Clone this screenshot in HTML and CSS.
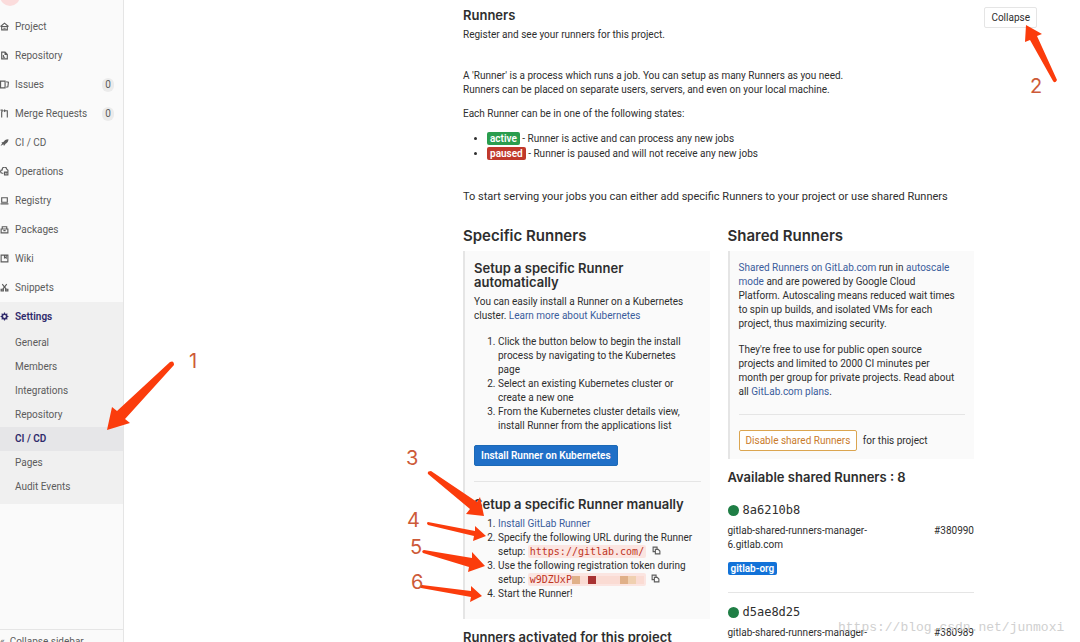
FILE: index.html
```html
<!DOCTYPE html>
<html lang="en">
<head>
    <meta charset="UTF-8">
    <meta name="viewport" content="width=device-width, initial-scale=1.0">
    <title>CI / CD Settings</title>
    <link rel="stylesheet" href="styles.css">
</head>
<body>
    <!-- Sidebar -->
    <aside class="sidebar">
        <div class="avatar"></div>
        <nav>
            <ul class="menu">
                <li><a href="#">
                    <svg class="icon" viewBox="0 0 16 16"><path d="M1 8l7-6 7 6M3 8v6h10V8M1 8h14M6 11h4"/></svg>
                    Project</a></li>
                <li><a href="#">
                    <svg class="icon" viewBox="0 0 16 16"><path d="M3 2h6l4 4v8H3zM9 2v4h4M6 7v4h3"/></svg>
                    Repository</a></li>
                <li><a href="#">
                    <svg class="icon" viewBox="0 0 16 16"><path d="M1 2h8v12H1zM11 3l4 1-1 8-3 1"/></svg>
                    Issues <span class="count">0</span></a></li>
                <li><a href="#">
                    <svg class="icon" viewBox="0 0 16 16"><path d="M3 15V4M1 2h3v3M7 3h6v12M9 1L7 3l2 2"/></svg>
                    Merge Requests <span class="count">0</span></a></li>
                <li><a href="#">
                    <svg class="icon solid" viewBox="0 0 16 16"><path d="M15 2c-5 0-7 2-9 5L2 8l2 1-3 5 5-3 1 3 3-4c3-2 5-4 5-8z"/></svg>
                    CI / CD</a></li>
                <li><a href="#">
                    <svg class="icon" viewBox="0 0 16 16"><path d="M6 11H4a3 3 0 0 1 0-6 4 4 0 0 1 8-1 3 3 0 0 1 2 4M8 9h6v5H8zM10 11h2"/></svg>
                    Operations</a></li>
                <li><a href="#">
                    <svg class="icon" viewBox="0 0 16 16"><path d="M3 3h10v8H3zM1 14h14"/></svg>
                    Registry</a></li>
                <li><a href="#">
                    <svg class="icon" viewBox="0 0 16 16"><path d="M2 7h12v7H2zM4 7V3h8v4M6 10h4"/></svg>
                    Packages</a></li>
                <li><a href="#">
                    <svg class="icon" viewBox="0 0 16 16"><path d="M2 2h12v12H2zM8 2v5l2-1 1 1V2"/></svg>
                    Wiki</a></li>
                <li><a href="#">
                    <svg class="icon" viewBox="0 0 16 16"><path d="M4 2l7 9M12 2L5 11M2 11h4v3H2zM10 11h4v3h-4z"/></svg>
                    Snippets</a></li>
            </ul>
            <div class="settings">
                <a class="settings-title" href="#">
                    <svg class="icon" viewBox="0 0 16 16"><circle cx="8" cy="8" r="4" stroke-width="3"/><path d="M8 1v3M8 12v3M1 8h3M12 8h3M3 3l2 2M11 11l2 2M13 3l-2 2M5 11l-2 2"/></svg>
                    Settings</a>
                <ul class="submenu">
                    <li><a href="#">General</a></li>
                    <li><a href="#">Members</a></li>
                    <li><a href="#">Integrations</a></li>
                    <li><a href="#">Repository</a></li>
                    <li><a class="current" href="#">CI / CD</a></li>
                    <li><a href="#">Pages</a></li>
                    <li><a href="#">Audit Events</a></li>
                </ul>
            </div>
        </nav>
        <a class="collapse-sidebar" href="#">&laquo; &nbsp;Collapse sidebar</a>
    </aside>

    <!-- Runners settings -->
    <main class="content">
        <header class="section-header">
            <div>
                <h1>Runners</h1>
                <p>Register and see your runners for this project.</p>
            </div>
            <button class="btn" type="button">Collapse</button>
        </header>

        <div class="section-body">
            <p>A 'Runner' is a process which runs a job. You can setup as many Runners as you need.<br>
            Runners can be placed on separate users, servers, and even on your local machine.</p>
            <p>Each Runner can be in one of the following states:</p>
            <ul class="states">
                <li><span class="label green">active</span> - Runner is active and can process any new jobs</li>
                <li><span class="label red">paused</span> - Runner is paused and will not receive any new jobs</li>
            </ul>
            <p class="lead">To start serving your jobs you can either add specific Runners to your project or use shared Runners</p>

            <div class="columns">
                <section>
                    <h2>Specific Runners</h2>
                    <div class="well specific">
                        <h3>Setup a specific Runner automatically</h3>
                        <p>You can easily install a Runner on a Kubernetes cluster. <a href="#">Learn more about Kubernetes</a></p>
                        <ol>
                            <li>Click the button below to begin the install process by navigating to the Kubernetes page</li>
                            <li>Select an existing Kubernetes cluster or create a new one</li>
                            <li>From the Kubernetes cluster details view, install Runner from the applications list</li>
                        </ol>
                        <button class="btn primary" type="button">Install Runner on Kubernetes</button>
                        <hr>
                        <h3>Setup a specific Runner manually</h3>
                        <ol>
                            <li><a href="#">Install GitLab Runner</a></li>
                            <li>Specify the following URL during the Runner setup: <code>https://gitlab.com/</code>
                                <button class="copy" type="button" aria-label="Copy URL"><svg class="icon" viewBox="0 0 16 16"><path d="M5 10H2V2h7v3M6 6h5l3 3v5H6z"/></svg></button></li>
                            <li>Use the following registration token during setup: <code class="token">w9DZUxP<span class="mosaic"><i class="tan"></i><i></i><i class="dark"></i><i></i><i></i><i></i><i class="tan"></i><i class="sand"></i><i></i></span></code>
                                <button class="copy" type="button" aria-label="Copy token"><svg class="icon" viewBox="0 0 16 16"><path d="M5 10H2V2h7v3M6 6h5l3 3v5H6z"/></svg></button></li>
                            <li>Start the Runner!</li>
                        </ol>
                    </div>
                    <h4>Runners activated for this project</h4>
                </section>

                <section>
                    <h2>Shared Runners</h2>
                    <div class="well shared">
                        <p><a href="#">Shared Runners on GitLab.com</a> run in <a href="#">autoscale mode</a> and are powered by Google Cloud Platform. Autoscaling means reduced wait times to spin up builds, and isolated VMs for each project, thus maximizing security.</p>
                        <p>They're free to use for public open source projects and limited to 2000 CI minutes per month per group for private projects. Read about all <a href="#">GitLab.com plans</a>.</p>
                        <hr>
                        <button class="btn warning" type="button">Disable shared Runners</button> for this project
                    </div>
                    <h4>Available shared Runners : 8</h4>
                    <ul class="runners">
                        <li>
                            <div class="runner-id"><span class="dot"></span>8a6210b8</div>
                            <div class="runner-info"><span>gitlab-shared-runners-manager-6.gitlab.com</span><span>#380990</span></div>
                            <span class="label blue">gitlab-org</span>
                        </li>
                        <li>
                            <div class="runner-id"><span class="dot"></span>d5ae8d25</div>
                            <div class="runner-info"><span>gitlab-shared-runners-manager-</span><span>#380989</span></div>
                        </li>
                    </ul>
                </section>
            </div>
        </div>
    </main>

    <!-- Numbered arrows drawn over the page -->
    <svg class="notes" width="1080" height="642" viewBox="0 0 1080 642">
        <g class="arrows">
            <path d="M107 430L112 407L117 411L170 362Q174 360 174 365L125 419L130 423Z"/>
            <path d="M1026 25L1042 34L1037 36L1057 80Q1055 84 1053 81L1030 40L1025 42Z"/>
            <path d="M484 516L466 514L470 509L428 474Q427 471 431 471L477 502L480 497Z"/>
            <path d="M486 536L473 541L474 536L428 525Q426 523 428 522L475 531L475 526Z"/>
            <path d="M485 566L468 572L469 567L423 553Q421 551 424 550L472 558L472 552Z"/>
            <path d="M482 596L470 602L471 597L421 588Q419 586 422 585L471 591L471 586Z"/>
        </g>
        <g class="numbers">
            <text x="189" y="368">1</text>
            <text x="1030" y="93">2</text>
            <text x="406" y="465">3</text>
            <text x="407" y="527">4</text>
            <text x="410" y="554">5</text>
            <text x="411" y="589">6</text>
        </g>
        <text class="watermark" x="838" y="631">https://blog.csdn.net/junmoxi</text>
    </svg>
</body>
</html>
```

FILE: styles.css
```css
* {
    box-sizing: border-box;
}
body {
    display: flex;
    height: 100vh;
    margin: 0;
    overflow: hidden;
    font-family: Roboto, "Liberation Sans", sans-serif;
    font-size: 10px;
    line-height: 14px;
    color: #2e2e2e;
    background-color: #fff;
}
a {
    color: #3a5d9c;
    text-decoration: none;
}
ul, ol {
    margin: 0;
    padding: 0;
}
p {
    margin: 0 0 10px;
}
h1, h2, h3, h4 {
    margin: 0;
    font-family: Inter, "Liberation Sans", sans-serif;
    font-weight: 600;
}
.icon {
    width: 9px;
    height: 9px;
    fill: none;
    stroke: currentColor;
    stroke-width: 2;
}
.icon.solid {
    fill: currentColor;
    stroke: none;
}

/* Sidebar */
.sidebar {
    display: flex;
    flex: 0 0 124px;
    flex-direction: column;
    overflow: hidden;
    background-color: #fafafa;
    border-right: 1px solid #e5e5e5;
}
.sidebar ul {
    list-style: none;
}
.sidebar a {
    display: flex;
    align-items: center;
    color: #5c5c5c;
}
.avatar {
    width: 20px;
    height: 12px;
    margin-top: -6px;
    margin-bottom: 6px;
    background-color: #fbdcdc;
    border-radius: 0 0 10px 10px;
}
.menu a, .settings-title {
    height: 29px;
    gap: 6px;
}
.count {
    width: 12px;
    margin-left: auto;
    margin-right: 9px;
    text-align: center;
    background-color: #ebebeb;
    border-radius: 6px;
}
.settings {
    padding-bottom: 5px;
    background-color: #f0f0f0;
}
.sidebar .settings-title {
    font-weight: 600;
    color: #2f2a6b;
}
.submenu a {
    height: 24px;
    padding-left: 15px;
}
.submenu .current {
    font-weight: 600;
    color: #2f2a6b;
    background-color: #e6e6e8;
}
.sidebar .collapse-sidebar {
    height: 12px;
    margin-top: auto;
    padding-top: 12px;
    border-top: 1px solid #e5e5e5;
}

/* Content */
.content {
    flex: 1;
    padding: 7px 43px 0 339px;
}
.section-header {
    display: flex;
    justify-content: space-between;
    align-items: flex-start;
    margin-bottom: 27px;
}
h1 {
    margin-bottom: 5px;
    font-size: 13px;
    line-height: 16px;
}
.section-header p {
    margin: 0;
}
.section-body {
    max-width: 511px;
}
.btn {
    height: 21px;
    padding: 0 6px;
    font-family: inherit;
    font-size: 10px;
    color: #2e2e2e;
    background-color: #fff;
    border: 1px solid #e5e5e5;
    border-radius: 2px;
}
.btn.primary {
    font-weight: 600;
    color: #fff;
    background-color: #1f6fc7;
    border-color: #1b69b6;
}
.btn.warning {
    margin-right: 3px;
    color: #c97b2c;
    border-color: #dba550;
}
.label {
    padding: 1px 3px;
    font-weight: 600;
    color: #fff;
    border-radius: 2px;
}
.green {
    background-color: #2a9d4e;
}
.red {
    background-color: #c0392b;
}
.blue {
    background-color: #1272d8;
}
.states {
    margin-bottom: 29px;
    padding-left: 24px;
    line-height: 15px;
}
.lead {
    margin-bottom: 23px;
    font-size: 11px;
    white-space: nowrap;
}
.columns {
    display: grid;
    grid-template-columns: 1fr 1fr;
    gap: 18px;
}
h2 {
    margin-bottom: 6px;
    font-size: 15px;
    line-height: 18px;
}
.well {
    padding: 10px 9px;
    background-color: #fafafa;
    border-left: 2px solid #e5e5e5;
}
.well p {
    margin-bottom: 12px;
}
.well hr {
    height: 1px;
    margin: 15px 0;
    background-color: #e5e5e5;
    border: 0;
}
h3 {
    margin-bottom: 6px;
    font-size: 13px;
    line-height: 14px;
}
.well ol {
    margin-bottom: 12px;
    padding-left: 24px;
    padding-right: 4px;
}
.well.specific {
    padding-bottom: 6px;
}
.well.shared {
    padding-bottom: 8px;
}
.well.shared p {
    padding-right: 7px;
}
h4 {
    margin-top: 11px;
    font-size: 13px;
}
code {
    padding: 1px 2px;
    font-family: "DejaVu Sans Mono", monospace;
    font-size: 10px;
    line-height: 12px;
    color: #c0341d;
    background-color: #fbe5e1;
    border-radius: 2px;
}
.mosaic {
    display: inline-flex;
    vertical-align: middle;
}
.mosaic i {
    width: 8px;
    height: 8px;
    background-color: #fadbd3;
}
.mosaic .tan {
    background-color: #e0b088;
}
.mosaic .dark {
    background-color: #a83232;
}
.mosaic .sand {
    background-color: #f0d0b0;
}
.copy {
    padding: 0;
    margin-left: 3px;
    line-height: 9px;
    color: #5c5c5c;
    background: none;
    border: 0;
}

/* Runner list */
.runners {
    margin-top: 19px;
    list-style: none;
}
.runners li {
    padding-bottom: 16px;
    margin-bottom: 12px;
    border-bottom: 1px solid #e5e5e5;
}
.runner-id {
    display: flex;
    align-items: center;
    gap: 4px;
    margin-bottom: 7px;
    font-family: "DejaVu Sans Mono", monospace;
    font-size: 12px;
}
.dot {
    width: 11px;
    height: 11px;
    background-color: #1f7e45;
    border-radius: 50%;
}
.runner-info {
    display: flex;
    justify-content: space-between;
    margin-bottom: 10px;
}
.runner-info span:first-child {
    width: 160px;
}

/* Arrows and numbers */
.notes {
    position: absolute;
    top: 0;
    left: 0;
    pointer-events: none;
}
.arrows {
    fill: #fb3c0c;
}
.numbers {
    font-family: Inter, sans-serif;
    font-size: 20px;
    fill: #cd5a38;
}
.watermark {
    font-family: "Liberation Mono", monospace;
    font-size: 13px;
    fill: #d0d0d0;
}
```
